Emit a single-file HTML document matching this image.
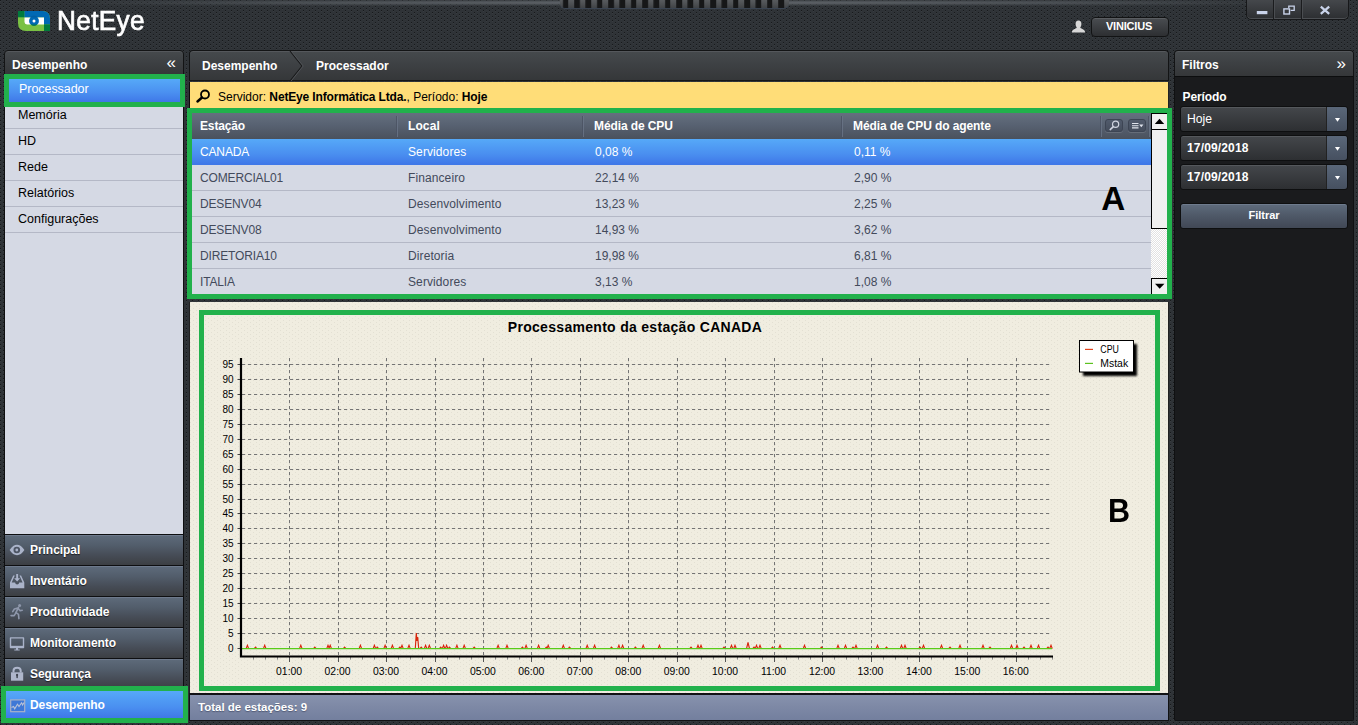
<!DOCTYPE html>
<html lang="pt-BR">
<head>
<meta charset="utf-8">
<title>NetEye - Desempenho - Processador</title>
<style>
*{box-sizing:border-box;margin:0;padding:0}
html,body{width:1358px;height:725px;overflow:hidden}
body{position:relative;font-family:"Liberation Sans",Arial,sans-serif;font-size:12px;color:#fff;
 background-color:#2f3337;
 background-image:radial-gradient(circle at 0.5px 0.5px,#17191b 0.55px,transparent 0.95px),radial-gradient(circle at 3.5px 2.5px,#17191b 0.55px,transparent 0.95px),radial-gradient(circle at 0.5px 1.5px,#383c40 0.5px,transparent 0.9px),radial-gradient(circle at 3.5px 3.5px,#383c40 0.5px,transparent 0.9px);
 background-size:6px 4px;}
.abs{position:absolute}
#topstrip{left:0;top:0;width:1358px;height:5.500px;background:linear-gradient(90deg,rgba(80,85,90,0) 4%,rgba(84,89,94,.75) 22%,rgba(92,97,102,.95) 41%,rgba(92,97,102,.95) 59%,rgba(84,89,94,.75) 78%,rgba(80,85,90,0) 96%);-webkit-mask-image:linear-gradient(rgba(0,0,0,.2) 0,#000 35%,#000 55%,transparent 100%);mask-image:linear-gradient(rgba(0,0,0,.2) 0,#000 35%,#000 55%,transparent 100%)}
#grip{left:560px;top:0;width:229px;height:9px;border-radius:0 0 5px 5px;
 background:repeating-linear-gradient(90deg,transparent 0,transparent 5.400px,#161718 5.900px,#161718 11.100px,transparent 11.340px) -2.800px 0,linear-gradient(#585b5e,#4d5053 50%,#404346);border-bottom:1px solid #3a4452}
/* logo */
#logotext{left:56.800px;top:3.400px;font-size:27.5px;line-height:36px;letter-spacing:0.35px;transform:scaleX(0.952);transform-origin:0 0;color:#fff;font-weight:normal;-webkit-text-stroke:0.7px #fff}
/* window buttons */
#winbtns{left:1246px;top:-2px;width:103px;height:22px;border:1px solid #17181a;border-radius:0 0 5px 5px;background:linear-gradient(#46494d,#2c2e31);box-shadow:inset 0 -1px 0 #4c4f53}
#winbtns i{position:absolute;top:0;width:1px;height:20px;background:#1b1c1e;box-shadow:1px 0 0 #4a4d51}
/* user */
#userbtn{left:1091px;top:17px;width:78px;height:20px;border:1px solid #121314;border-radius:4px;background:linear-gradient(#4a4d51,#2d2f32);
 font-weight:bold;font-size:11px;letter-spacing:-0.2px;line-height:16.500px;text-align:center;text-indent:-2px;color:#fff;box-shadow:inset 0 1px 0 #5a5d61}
/* panels */
.phead{background:linear-gradient(#464a4d,#3d4043 50%,#353739);border:1px solid #131415;border-radius:4px 4px 0 0;font-weight:bold;font-size:12px;color:#fff;box-shadow:inset 0 1px 0 #55585c}
#left{left:4px;top:51px;width:180px;height:671px}
#lefthead{left:0;top:-1px;width:180px;height:25px;line-height:28px;padding-left:7px}
#leftbody{left:0;top:23px;width:180px;height:460px;background:#d5d9e4;border-left:1px solid #0e0f10;border-right:1px solid #0e0f10}
.mi{position:absolute;left:1px;width:178px;height:26px;border-bottom:1px solid #b4b8c6;color:#000;font-size:12.5px;line-height:24px;padding-left:13px;letter-spacing:0}
#misel{left:0;top:23px;width:181px;height:33px;border:5px solid #22b14c;background:linear-gradient(#56a9f8,#4a8ff0 60%,#3f78e8);color:#fff;font-size:12.5px;letter-spacing:-0.05px;line-height:21px;padding-left:10px}
.acc{position:absolute;left:0;width:180px;height:31px;border:1px solid #0e0f11;border-bottom:none;background:linear-gradient(#5e6b7b,#525d6b 35%,#464c56 68%,#3c3f43);font-weight:bold;font-size:12px;color:#fff;line-height:30px;padding-left:25px;box-shadow:inset 0 1px 0 #6e7a8c;text-shadow:0 1px 1px #1c1d20;letter-spacing:-0.05px}
#accsel{left:-3px;top:635px;width:187px;height:37px;border:5px solid #22b14c;background:linear-gradient(#56a9f8,#4a8ff0 60%,#3f78e8);font-weight:bold;font-size:12px;color:#fff;line-height:28px;padding-left:24px;letter-spacing:-0.05px}
/* main */
#main{left:190px;top:51px;width:979px;height:670px}
#crumb{left:-1px;top:-1px;width:980px;height:31px;line-height:30px;border-bottom-color:#161718}
#yellow{left:-1px;top:30.500px;width:980px;height:28px;background:#ffdd78;color:#000;font-size:12px;line-height:31px;padding-left:28px;border-left:1px solid #0c0c0c;border-right:1px solid #222}
#yellow b{letter-spacing:-0.150px}
#gridA{left:-3px;top:57px;width:985px;height:191px;border:5px solid #22b14c;background:#d5d9e4;overflow:hidden}
#ghead{left:0;top:0;width:959px;height:26px;background:linear-gradient(#65707f,#586272 45%,#4a515d);font-weight:bold;font-size:12px;line-height:26px;color:#fff;letter-spacing:-0.1px}
#ghead span{position:absolute;top:0}
.row{position:absolute;left:0;width:959px;height:26px;border-bottom:1px solid #b4b8c6;color:#434a5b;font-size:12px;line-height:26px}
.row span{position:absolute;top:0}
.row.sel{background:linear-gradient(#56a9f8,#4a8ff0 60%,#3f78e8);color:#fff;border-bottom-color:#3f78e8}
.c1{left:8px;letter-spacing:-0.15px}.c2{left:216px;letter-spacing:0.1px}.c3{left:403px}.c4{left:662px}
#vs{left:959px;top:0;width:16px;height:181px;background-color:#fff;background-image:linear-gradient(45deg,#e2e2e2 25%,transparent 25%,transparent 75%,#e2e2e2 75%),linear-gradient(45deg,#e2e2e2 25%,transparent 25%,transparent 75%,#e2e2e2 75%);background-size:2px 2px;background-position:0 0,1px 1px}
#vs div{position:absolute;left:0;width:16px;background:#f0f0f0;border-left:1px solid #000}
.tool{position:absolute;top:6px;width:18px;height:13px;border:1px solid #3d4554;border-radius:3px;background:linear-gradient(#515b6c,#454d5c);box-shadow:0 1px 0 rgba(255,255,255,.12)}
.csep{position:absolute;top:3px;width:2px;height:21px;background:linear-gradient(90deg,#4a5262 50%,#6a7587 50%);opacity:.8}
#chart{left:-1px;top:251px;width:980px;height:391px;background-color:#f0ede0;border-left:1px solid #222;border-right:1px solid #222;
 background-image:radial-gradient(circle at 0.5px 0.5px,#e3e0d3 0.5px,transparent 0.9px),radial-gradient(circle at 3.5px 2.5px,#e3e0d3 0.5px,transparent 0.9px);background-size:6px 4px}
#boxB{left:9px;top:259px;width:961px;height:381px;border:5px solid #22b14c}
#status{left:-1px;top:642px;width:980px;height:28px;border:1px solid #111214;border-top-width:2px;background:linear-gradient(#8792ad,#7d88a5 50%,#737f9e);font-weight:bold;font-size:11.5px;line-height:25px;padding-left:8px;color:#fff;text-shadow:0 1px 1px rgba(40,45,70,.5)}
/* right */
#right{left:1174px;top:51px;width:179px;height:671px}
#righthead{left:0;top:-1px;width:180px;height:27px;line-height:29px;padding-left:7px;border-bottom-color:#0c0d0e}
#rightbody{left:0;top:25px;width:180px;height:644.500px;background:#1a1b1d;border:1px solid #101112;border-top:none;border-radius:0 0 2px 2px}
.combo{position:absolute;left:6px;width:168px;height:26px;border:1px solid #0e0f10;border-radius:3px;background:linear-gradient(#44474b,#2d2f32);font-size:12.200px;line-height:24px;padding-left:6px;color:#fff;box-shadow:inset 0 1px 0 #55585c}
.combo b{font-size:12px;letter-spacing:0.150px}
.combo i{position:absolute;right:0;top:0;width:21px;height:24px;border-left:1px solid #222;background:linear-gradient(#5a6779,#465060);border-radius:0 3px 3px 0}
.combo i:after{content:"";position:absolute;left:7.800px;top:10.700px;width:5.400px;height:4px;background:#fff;clip-path:polygon(0 0,100% 0,50% 100%)}
#filtrar{left:6px;top:151.500px;width:168px;height:26.500px;border:1px solid #0e0f10;border-radius:3px;background:linear-gradient(#5f6c7d,#4e5867 50%,#414855);font-weight:bold;font-size:11px;line-height:22.500px;text-align:center;color:#fff;box-shadow:inset 0 1px 0 #6e7b8d}
</style>
</head>
<body>
<div id="topstrip" class="abs"></div>
<div id="grip" class="abs"></div>

<!-- logo -->
<svg class="abs" style="left:18px;top:11px" width="32" height="20" viewBox="0 0 32 20">
 <path d="M0 0H24.500Q32 0 32 7.500V20H8Q0 20 0 12Z" fill="#7ac143"/>
 <path d="M6.300 0H24.500Q32 0 32 7.500V13.400H26V6.600H6.300Z" fill="#0069b4"/>
 <path d="M0 0H6.300V6.300H0Z" fill="#007a3d"/>
 <path d="M26 13.400H32V20H26Z" fill="#007a3d"/>
 <path d="M6.500 6.600H26V13.400H9Q6.500 13.400 6.500 11Z" fill="#fff"/>
 <circle cx="16" cy="9.900" r="4.900" fill="#0069b4"/>
 <path d="M12.600 13.400A4.900 4.900 0 0 0 19.400 13.400Z" fill="#007a3d"/>
 <path d="M12 6.600A4.900 4.900 0 0 1 20 6.600Z" fill="#005fa3"/>
 <circle cx="16" cy="9.900" r="1.500" fill="#fff"/>
</svg>
<div id="logotext" class="abs">NetEye</div>

<!-- window buttons -->
<div id="winbtns" class="abs"><i style="left:26px"></i><i style="left:54px"></i>
 <svg class="abs" style="left:0;top:0" width="100" height="20" viewBox="0 0 100 20">
  <rect x="9.800" y="12" width="10.600" height="3.200" fill="#c9d3ea"/>
  <path d="M41.800 9V7.100H47.200V11.400H43.600" fill="none" stroke="#c9d3ea" stroke-width="1.300"/>
  <rect x="36.900" y="9.900" width="5.600" height="5.100" fill="none" stroke="#c9d3ea" stroke-width="1.400"/>
  <path d="M73.800 7.600L82.200 14.800M82.200 7.600L73.800 14.800" stroke="#c9d3ea" stroke-width="2.300"/>
 </svg>
</div>

<!-- user -->
<svg class="abs" style="left:1071px;top:20px" width="15" height="13" viewBox="0 0 15 13">
 <path d="M7.500 0.500C9.600 0.500 10.400 2 10.400 4C10.400 5.800 9.600 6.800 9.200 7.600C9.200 8.600 13.500 9.300 14 11.500V12.500H1V11.500C1.500 9.300 5.800 8.600 5.800 7.600C5.400 6.800 4.600 5.800 4.600 4C4.600 2 5.400 0.500 7.500 0.500Z" fill="#d8d8d8"/>
</svg>
<div id="userbtn" class="abs">VINICIUS</div>

<!-- left panel -->
<div id="left" class="abs">
 <div id="lefthead" class="abs phead">Desempenho<span class="abs" style="right:7px;top:-2px;font-weight:normal;font-size:17px">«</span></div>
 <div id="leftbody" class="abs"></div>
 <div id="misel" class="abs">Processador</div>
 <div class="mi" style="top:52px">Memória</div>
 <div class="mi" style="top:78px">HD</div>
 <div class="mi" style="top:104px">Rede</div>
 <div class="mi" style="top:130px">Relatórios</div>
 <div class="mi" style="top:156px">Configurações</div>
 <div class="acc" style="top:483px">Principal</div>
 <div class="acc" style="top:514px">Inventário</div>
 <div class="acc" style="top:545px">Produtividade</div>
 <div class="acc" style="top:576px">Monitoramento</div>
 <div class="acc" style="top:607px">Segurança</div>

 <!-- accordion icons -->
 <svg class="abs" style="left:5px;top:493px" width="16" height="12" viewBox="0 0 16 12"><path d="M0.600 6Q4 0.800 8 0.800T15.400 6Q12 11.200 8 11.200T0.600 6Z" fill="#aab3c9"/><circle cx="7.800" cy="6" r="3.300" fill="#4d5564"/><circle cx="7.800" cy="6" r="1.400" fill="#aab3c9"/></svg>
 <svg class="abs" style="left:5px;top:522px" width="16" height="16" viewBox="0 0 16 16"><path d="M4.200 2.500L1 9.500V15.200H15.300V9.500L12.100 2.500H10.500L13.600 9.500H10.200Q10 11.600 8.150 11.600T6.100 9.500H2.700L5.800 2.500Z" fill="#aab3c9"/><path d="M7.200 1H9.100V5.300H11.100L8.150 8.600L5.200 5.300H7.200Z" fill="#aab3c9"/></svg>
 <svg class="abs" style="left:6px;top:552px" width="14" height="17" viewBox="0 0 14 17"><circle cx="9.600" cy="2.400" r="1.500" fill="#8e97ab"/><path d="M8.500 4.300L5.700 10.200L4.200 12.600H1M5.700 9.300L8.500 11.400L8.900 15.600M7.800 5L4.400 6L2.700 8.600M8.300 5.600L10.100 7.700L12.200 7.200" fill="none" stroke="#8e97ab" stroke-width="1.600" stroke-linecap="round" stroke-linejoin="round"/></svg>
 <svg class="abs" style="left:5px;top:585px" width="16" height="16" viewBox="0 0 16 16"><path d="M1.500 1.900H14.500V11.500H1.500Z" fill="none" stroke="#a9b2c8" stroke-width="1.400" stroke-linejoin="round"/><path d="M1.500 9.800H14.500V11.500H1.500Z" fill="#a9b2c8"/><path d="M7 11.500H9V13.600H10.700V14.600H5.300V13.600H7Z" fill="#a9b2c8"/></svg>
 <svg class="abs" style="left:6px;top:615px" width="14" height="16" viewBox="0 0 14 16"><path d="M3.500 6.500V4.700Q3.500 1.700 7.100 1.700T10.700 4.700V6.500" fill="none" stroke="#aeb6cb" stroke-width="2"/><path d="M1 6.300H13.200V14.700H1Z" fill="#aeb6cb"/><path d="M7.100 8.600V11.600" stroke="#3e444e" stroke-width="1.500" stroke-linecap="round"/><circle cx="7.100" cy="9" r="1.100" fill="#3e444e"/></svg>
 <div id="accsel" class="abs">Desempenho<svg class="abs" style="left:4px;top:8px" width="16" height="14" viewBox="0 0 16 14"><rect x="0.700" y="0.900" width="14" height="11.800" fill="#3f78d6" stroke="#a9b2c8" stroke-width="1.200"/><path d="M1.500 8.500L3.500 7.500L4.700 9.800L7.500 5.300L9 7.500L11.600 3.800L12.600 6L14 3.500" fill="none" stroke="#b9c2d8" stroke-width="1.100"/></svg></div>
</div>

<!-- main panel -->
<div id="main" class="abs">
 <div id="crumb" class="abs phead"><span class="abs" style="left:12px">Desempenho</span><span class="abs" style="left:126px">Processador</span>
  <svg class="abs" style="left:97px;top:0" width="20" height="30" viewBox="0 0 20 30"><path d="M3 0L15 15L3 30" fill="none" stroke="#191a1b" stroke-width="1.2"/><path d="M4.200 0L16.200 15L4.200 30" fill="none" stroke="#505357" stroke-width="1"/></svg>
 </div>
 <div id="yellow" class="abs">Servidor: <b>NetEye Informática Ltda.</b>, Período: <b>Hoje</b>
  <svg class="abs" style="left:6px;top:7.700px" width="16" height="14" viewBox="0 0 16 14"><circle cx="9" cy="5.500" r="4" fill="none" stroke="#000" stroke-width="1.800"/><path d="M6 8.500L1.500 12.500" stroke="#000" stroke-width="2.400" stroke-linecap="round"/></svg>
 </div>
 <div id="gridA" class="abs">
  <div id="ghead" class="abs"><span class="c1">Estação</span><span class="c2">Local</span><span style="left:402px">Média de CPU</span><span style="left:661px">Média de CPU do agente</span>
   <i class="csep" style="left:204px"></i><i class="csep" style="left:390px"></i><i class="csep" style="left:649px"></i><i class="csep" style="left:908px"></i><i class="csep" style="left:956px"></i>
   <div class="tool" style="left:913px"><svg class="abs" style="left:0;top:0" width="16" height="11" viewBox="0 0 16 11"><circle cx="9.600" cy="4.200" r="3.100" fill="none" stroke="#cfd4e0" stroke-width="1.200"/><path d="M7.300 6.600L4.200 9.600" stroke="#cfd4e0" stroke-width="1.500" stroke-linecap="round"/></svg></div>
   <div class="tool" style="left:936px"><svg class="abs" style="left:0;top:0" width="16" height="11" viewBox="0 0 16 11"><path d="M3 3.500H9.500M3 5.700H9.500M3 7.900H9.500" stroke="#dfe3ec" stroke-width="1.100"/><path d="M10.200 4.600H14.400L12.300 7.200Z" fill="#dfe3ec"/></svg></div>
  </div>
  <div class="row sel" style="top:26px"><span class="c1">CANADA</span><span class="c2">Servidores</span><span class="c3">0,08 %</span><span class="c4">0,11 %</span></div>
  <div class="row" style="top:52px"><span class="c1">COMERCIAL01</span><span class="c2">Financeiro</span><span class="c3">22,14 %</span><span class="c4">2,90 %</span></div>
  <div class="row" style="top:78px"><span class="c1">DESENV04</span><span class="c2">Desenvolvimento</span><span class="c3">13,23 %</span><span class="c4">2,25 %</span></div>
  <div class="row" style="top:104px"><span class="c1">DESENV08</span><span class="c2">Desenvolvimento</span><span class="c3">14,93 %</span><span class="c4">3,62 %</span></div>
  <div class="row" style="top:130px"><span class="c1">DIRETORIA10</span><span class="c2">Diretoria</span><span class="c3">19,98 %</span><span class="c4">6,81 %</span></div>
  <div class="row" style="top:156px"><span class="c1">ITALIA</span><span class="c2">Servidores</span><span class="c3">3,13 %</span><span class="c4">1,08 %</span></div>
  <div id="vs" class="abs">
   <div style="top:0;height:18px;border-top:1px solid #000;border-bottom:2px solid #000"></div>
   <div style="top:17px;height:99px;border-bottom:1px solid #000"></div>
   <div style="top:165px;height:16px;border-top:1px solid #000"></div>
   <svg class="abs" style="left:1px;top:0" width="15" height="181" viewBox="0 0 15 181"><path d="M2.800 11L7.500 5.800L12.200 11Z" fill="#000"/><path d="M3 170.800H12.400L7.700 175.800Z" fill="#000"/></svg>
  </div>
 </div>
 <div id="chart" class="abs"></div>
 <!--CHART-START-->
<svg class="abs" id="chartsvg" style="left:0;top:252px" width="979" height="390" viewBox="0 0 979 390" font-family="Liberation Sans, Arial, sans-serif">
<defs><filter id="sh" x="-10%" y="-10%" width="130%" height="140%"><feGaussianBlur stdDeviation="0.8"/></filter></defs>
<text x="445" y="28.600000000000023" font-size="14" font-weight="bold" letter-spacing="0.3" text-anchor="middle" fill="#000">Processamento da estação CANADA</text>
<path d="M52.0 345.5H860.0M52.0 330.5H860.0M52.0 315.5H860.0M52.0 300.5H860.0M52.0 285.5H860.0M52.0 270.5H860.0M52.0 255.5H860.0M52.0 240.5H860.0M52.0 225.5H860.0M52.0 210.5H860.0M52.0 196.5H860.0M52.0 181.5H860.0M52.0 166.5H860.0M52.0 151.5H860.0M52.0 136.5H860.0M52.0 121.5H860.0M52.0 106.5H860.0M52.0 91.5H860.0M52.0 76.5H860.0M52.0 61.5H860.0" stroke="#747474" stroke-width="1" stroke-dasharray="3.2 2.8" fill="none"/>
<path d="M99.5 55.0V352.0M148.5 55.0V352.0M196.5 55.0V352.0M245.5 55.0V352.0M293.5 55.0V352.0M341.5 55.0V352.0M390.5 55.0V352.0M438.5 55.0V352.0M487.5 55.0V352.0M535.5 55.0V352.0M584.5 55.0V352.0M632.5 55.0V352.0M681.5 55.0V352.0M729.5 55.0V352.0M777.5 55.0V352.0M826.5 55.0V352.0" stroke="#747474" stroke-width="1" stroke-dasharray="3.2 2.8" fill="none"/>
<text x="43.6" y="349.1" font-size="10" text-anchor="end" fill="#000">0</text>
<text x="43.6" y="334.1" font-size="10" text-anchor="end" fill="#000">5</text>
<text x="43.6" y="319.1" font-size="10" text-anchor="end" fill="#000">10</text>
<text x="43.6" y="304.1" font-size="10" text-anchor="end" fill="#000">15</text>
<text x="43.6" y="289.1" font-size="10" text-anchor="end" fill="#000">20</text>
<text x="43.6" y="274.1" font-size="10" text-anchor="end" fill="#000">25</text>
<text x="43.6" y="259.1" font-size="10" text-anchor="end" fill="#000">30</text>
<text x="43.6" y="244.1" font-size="10" text-anchor="end" fill="#000">35</text>
<text x="43.6" y="229.1" font-size="10" text-anchor="end" fill="#000">40</text>
<text x="43.6" y="214.1" font-size="10" text-anchor="end" fill="#000">45</text>
<text x="43.6" y="200.1" font-size="10" text-anchor="end" fill="#000">50</text>
<text x="43.6" y="185.1" font-size="10" text-anchor="end" fill="#000">55</text>
<text x="43.6" y="170.1" font-size="10" text-anchor="end" fill="#000">60</text>
<text x="43.6" y="155.1" font-size="10" text-anchor="end" fill="#000">65</text>
<text x="43.6" y="140.1" font-size="10" text-anchor="end" fill="#000">70</text>
<text x="43.6" y="125.1" font-size="10" text-anchor="end" fill="#000">75</text>
<text x="43.6" y="110.1" font-size="10" text-anchor="end" fill="#000">80</text>
<text x="43.6" y="95.1" font-size="10" text-anchor="end" fill="#000">85</text>
<text x="43.6" y="80.1" font-size="10" text-anchor="end" fill="#000">90</text>
<text x="43.6" y="65.1" font-size="10" text-anchor="end" fill="#000">95</text>
<path d="M47.5 345.5H50.0M47.5 330.5H50.0M47.5 315.5H50.0M47.5 300.5H50.0M47.5 285.5H50.0M47.5 270.5H50.0M47.5 255.5H50.0M47.5 240.5H50.0M47.5 225.5H50.0M47.5 210.5H50.0M47.5 196.5H50.0M47.5 181.5H50.0M47.5 166.5H50.0M47.5 151.5H50.0M47.5 136.5H50.0M47.5 121.5H50.0M47.5 106.5H50.0M47.5 91.5H50.0M47.5 76.5H50.0M47.5 61.5H50.0" stroke="#444" stroke-width="1" fill="none"/>
<path d="M99.5 354.0V359.0M148.5 354.0V359.0M196.5 354.0V359.0M245.5 354.0V359.0M293.5 354.0V359.0M341.5 354.0V359.0M390.5 354.0V359.0M438.5 354.0V359.0M487.5 354.0V359.0M535.5 354.0V359.0M584.5 354.0V359.0M632.5 354.0V359.0M681.5 354.0V359.0M729.5 354.0V359.0M777.5 354.0V359.0M826.5 354.0V359.0" stroke="#555" stroke-width="1" fill="none"/>
<path d="M63.5 354.0V356.6M75.5 354.0V356.6M87.5 354.0V356.6M111.5 354.0V356.6M123.5 354.0V356.6M136.5 354.0V356.6M160.5 354.0V356.6M172.5 354.0V356.6M184.5 354.0V356.6M208.5 354.0V356.6M220.5 354.0V356.6M232.5 354.0V356.6M257.5 354.0V356.6M269.5 354.0V356.6M281.5 354.0V356.6M305.5 354.0V356.6M317.5 354.0V356.6M329.5 354.0V356.6M354.5 354.0V356.6M366.5 354.0V356.6M378.5 354.0V356.6M402.5 354.0V356.6M414.5 354.0V356.6M426.5 354.0V356.6M450.5 354.0V356.6M463.5 354.0V356.6M475.5 354.0V356.6M499.5 354.0V356.6M511.5 354.0V356.6M523.5 354.0V356.6M547.5 354.0V356.6M559.5 354.0V356.6M572.5 354.0V356.6M596.5 354.0V356.6M608.5 354.0V356.6M620.5 354.0V356.6M644.5 354.0V356.6M656.5 354.0V356.6M668.5 354.0V356.6M693.5 354.0V356.6M705.5 354.0V356.6M717.5 354.0V356.6M741.5 354.0V356.6M753.5 354.0V356.6M765.5 354.0V356.6M790.5 354.0V356.6M802.5 354.0V356.6M814.5 354.0V356.6M838.5 354.0V356.6M850.5 354.0V356.6M862.5 354.0V356.6" stroke="#888" stroke-width="1" fill="none"/>
<text x="99.1" y="371.8" font-size="10.4" text-anchor="middle" fill="#000">01:00</text>
<text x="147.6" y="371.8" font-size="10.4" text-anchor="middle" fill="#000">02:00</text>
<text x="196.0" y="371.8" font-size="10.4" text-anchor="middle" fill="#000">03:00</text>
<text x="244.5" y="371.8" font-size="10.4" text-anchor="middle" fill="#000">04:00</text>
<text x="292.9" y="371.8" font-size="10.4" text-anchor="middle" fill="#000">05:00</text>
<text x="341.3" y="371.8" font-size="10.4" text-anchor="middle" fill="#000">06:00</text>
<text x="389.8" y="371.8" font-size="10.4" text-anchor="middle" fill="#000">07:00</text>
<text x="438.2" y="371.8" font-size="10.4" text-anchor="middle" fill="#000">08:00</text>
<text x="486.7" y="371.8" font-size="10.4" text-anchor="middle" fill="#000">09:00</text>
<text x="535.1" y="371.8" font-size="10.4" text-anchor="middle" fill="#000">10:00</text>
<text x="583.5" y="371.8" font-size="10.4" text-anchor="middle" fill="#000">11:00</text>
<text x="632.0" y="371.8" font-size="10.4" text-anchor="middle" fill="#000">12:00</text>
<text x="680.4" y="371.8" font-size="10.4" text-anchor="middle" fill="#000">13:00</text>
<text x="728.9" y="371.8" font-size="10.4" text-anchor="middle" fill="#000">14:00</text>
<text x="777.3" y="371.8" font-size="10.4" text-anchor="middle" fill="#000">15:00</text>
<text x="825.7" y="371.8" font-size="10.4" text-anchor="middle" fill="#000">16:00</text>
<path d="M56.1 345.6L57.4 342.4L58.7 345.6M64.2 345.6L65.5 344.2L66.8 345.6M73.4 345.6L74.7 342.4L76.0 345.6M109.5 345.6L110.8 342.4L112.1 345.6M123.5 345.6L124.8 344.2L126.1 345.6M136.7 345.6L138.0 342.4L139.3 345.6M138.9 345.6L140.2 342.4L141.5 345.6M153.3 345.6L154.6 344.2L155.9 345.6M169.1 345.6L170.4 342.4L171.7 345.6M183.1 345.6L184.4 342.4L185.7 345.6M186.0 345.6L187.3 344.2L188.6 345.6M193.8 345.6L195.1 342.4L196.4 345.6M201.1 345.6L202.4 342.4L203.7 345.6M208.5 345.6L209.8 344.2L211.1 345.6M210.7 345.6L212.0 342.4L213.3 345.6M217.7 345.6L219.0 342.4L220.3 345.6M229.9 345.6L231.2 344.2L232.5 345.6M234.3 345.6L235.6 342.4L236.9 345.6M238.0 345.6L239.3 342.4L240.6 345.6M249.4 345.6L250.7 344.2L252.0 345.6M252.3 345.6L253.6 342.4L254.9 345.6M255.3 345.6L256.6 342.4L257.9 345.6M258.2 345.6L259.5 344.2L260.8 345.6M265.6 345.6L266.9 342.4L268.2 345.6M272.9 345.6L274.2 342.4L275.5 345.6M282.9 345.6L284.2 344.2L285.5 345.6M306.8 345.6L308.1 342.4L309.4 345.6M315.7 345.6L317.0 342.4L318.3 345.6M331.1 345.6L332.4 344.2L333.7 345.6M334.8 345.6L336.1 342.4L337.4 345.6M347.3 345.6L348.6 342.4L349.9 345.6M355.0 345.6L356.3 344.2L357.6 345.6M356.9 345.6L358.2 342.4L359.5 345.6M372.0 345.6L373.3 342.4L374.6 345.6M378.2 345.6L379.5 344.2L380.8 345.6M395.9 345.6L397.2 342.4L398.5 345.6M403.3 345.6L404.6 342.4L405.9 345.6M420.2 345.6L421.5 344.2L422.8 345.6M427.6 345.6L428.9 342.4L430.2 345.6M431.3 345.6L432.6 342.4L433.9 345.6M444.1 345.6L445.4 344.2L446.7 345.6M451.9 345.6L453.2 342.4L454.5 345.6M468.1 345.6L469.4 342.4L470.7 345.6M499.7 345.6L501.0 344.2L502.3 345.6M506.7 345.6L508.0 342.4L509.3 345.6M509.7 345.6L511.0 342.4L512.3 345.6M532.7 345.6L534.0 344.2L535.3 345.6M540.2 345.6L541.5 342.4L542.8 345.6M543.7 345.6L545.0 342.4L546.3 345.6M562.7 345.6L564.0 344.2L565.3 345.6M565.2 345.6L566.5 342.4L567.8 345.6M568.7 345.6L570.0 342.4L571.3 345.6M581.2 345.6L582.5 344.2L583.8 345.6M588.7 345.6L590.0 342.4L591.3 345.6M613.2 345.6L614.5 342.4L615.8 345.6M630.2 345.6L631.5 344.2L632.8 345.6M646.7 345.6L648.0 342.4L649.3 345.6M654.2 345.6L655.5 342.4L656.8 345.6M661.7 345.6L663.0 344.2L664.3 345.6M664.7 345.6L666.0 342.4L667.3 345.6M686.2 345.6L687.5 342.4L688.8 345.6M695.2 345.6L696.5 344.2L697.8 345.6M710.2 345.6L711.5 342.4L712.8 345.6M713.7 345.6L715.0 342.4L716.3 345.6M728.7 345.6L730.0 344.2L731.3 345.6M732.2 345.6L733.5 342.4L734.8 345.6M750.2 345.6L751.5 342.4L752.8 345.6M758.7 345.6L760.0 344.2L761.3 345.6M768.7 345.6L770.0 342.4L771.3 345.6M791.7 345.6L793.0 342.4L794.3 345.6M798.7 345.6L800.0 344.2L801.3 345.6M820.2 345.6L821.5 342.4L822.8 345.6M825.7 345.6L827.0 342.4L828.3 345.6M832.7 345.6L834.0 344.2L835.3 345.6M839.7 345.6L841.0 342.4L842.3 345.6M847.2 345.6L848.5 342.4L849.8 345.6M856.7 345.6L858.0 344.2L859.3 345.6M859.7 345.6L861.0 342.4L862.3 345.6M225.3 345.6L226.3 330.0L227.0 338.0L227.7 334.0L228.7 345.6M556.5 345.6L558.0 339.5L559.5 345.6" stroke="#d8260c" stroke-width="1.15" fill="none" stroke-linejoin="miter"/>
<path d="M52.0 345.6H862.0" stroke="#58cc18" stroke-width="1.3" fill="none"/>
<path d="M51.0 55.0V353.5H863.0" stroke="#000" stroke-width="2.2" fill="none"/>
<rect x="893" y="41" width="54" height="32" fill="#000" filter="url(#sh)"/>
<rect x="889.5" y="37.5" width="54" height="31.5" fill="#fff" stroke="#000" stroke-width="1"/>
<path d="M895 46.39999999999998H903" stroke="#e2431c" stroke-width="1.2"/>
<path d="M895 60.39999999999998H903" stroke="#5cc21f" stroke-width="1.2"/>
<text x="910.3" y="49.80000000000001" font-size="10" fill="#000" textLength="18.6" lengthAdjust="spacingAndGlyphs">CPU</text>
<text x="910.3" y="63.80000000000001" font-size="10" fill="#000" textLength="27.8" lengthAdjust="spacingAndGlyphs">Mstak</text>
</svg>
<!--CHART-END-->
 <div id="boxB" class="abs"></div>
 <div class="abs" style="left:911.200px;top:127.500px;font-size:33.200px;font-weight:bold;color:#000;line-height:40px">A</div>
 <div class="abs" style="left:917.900px;top:439.900px;transform:scaleX(0.92);transform-origin:0 0;font-size:33.200px;font-weight:bold;color:#000;line-height:40px">B</div>
 <div id="status" class="abs">Total de estações: 9</div>
</div>

<!-- right panel -->
<div id="right" class="abs">
 <div id="rightbody" class="abs"></div>
 <div id="righthead" class="abs phead">Filtros<span class="abs" style="right:7px;top:-2px;font-weight:normal;font-size:17px">»</span></div>
 <div class="abs" style="left:8.500px;top:38.500px;font-weight:bold;font-size:12px;letter-spacing:-0.100px">Período</div>
 <div class="combo" style="top:55px">Hoje<i></i></div>
 <div class="combo" style="top:84px"><b>17/09/2018</b><i></i></div>
 <div class="combo" style="top:113px"><b>17/09/2018</b><i></i></div>
 <div id="filtrar" class="abs">Filtrar</div>
</div>
</body>
</html>
